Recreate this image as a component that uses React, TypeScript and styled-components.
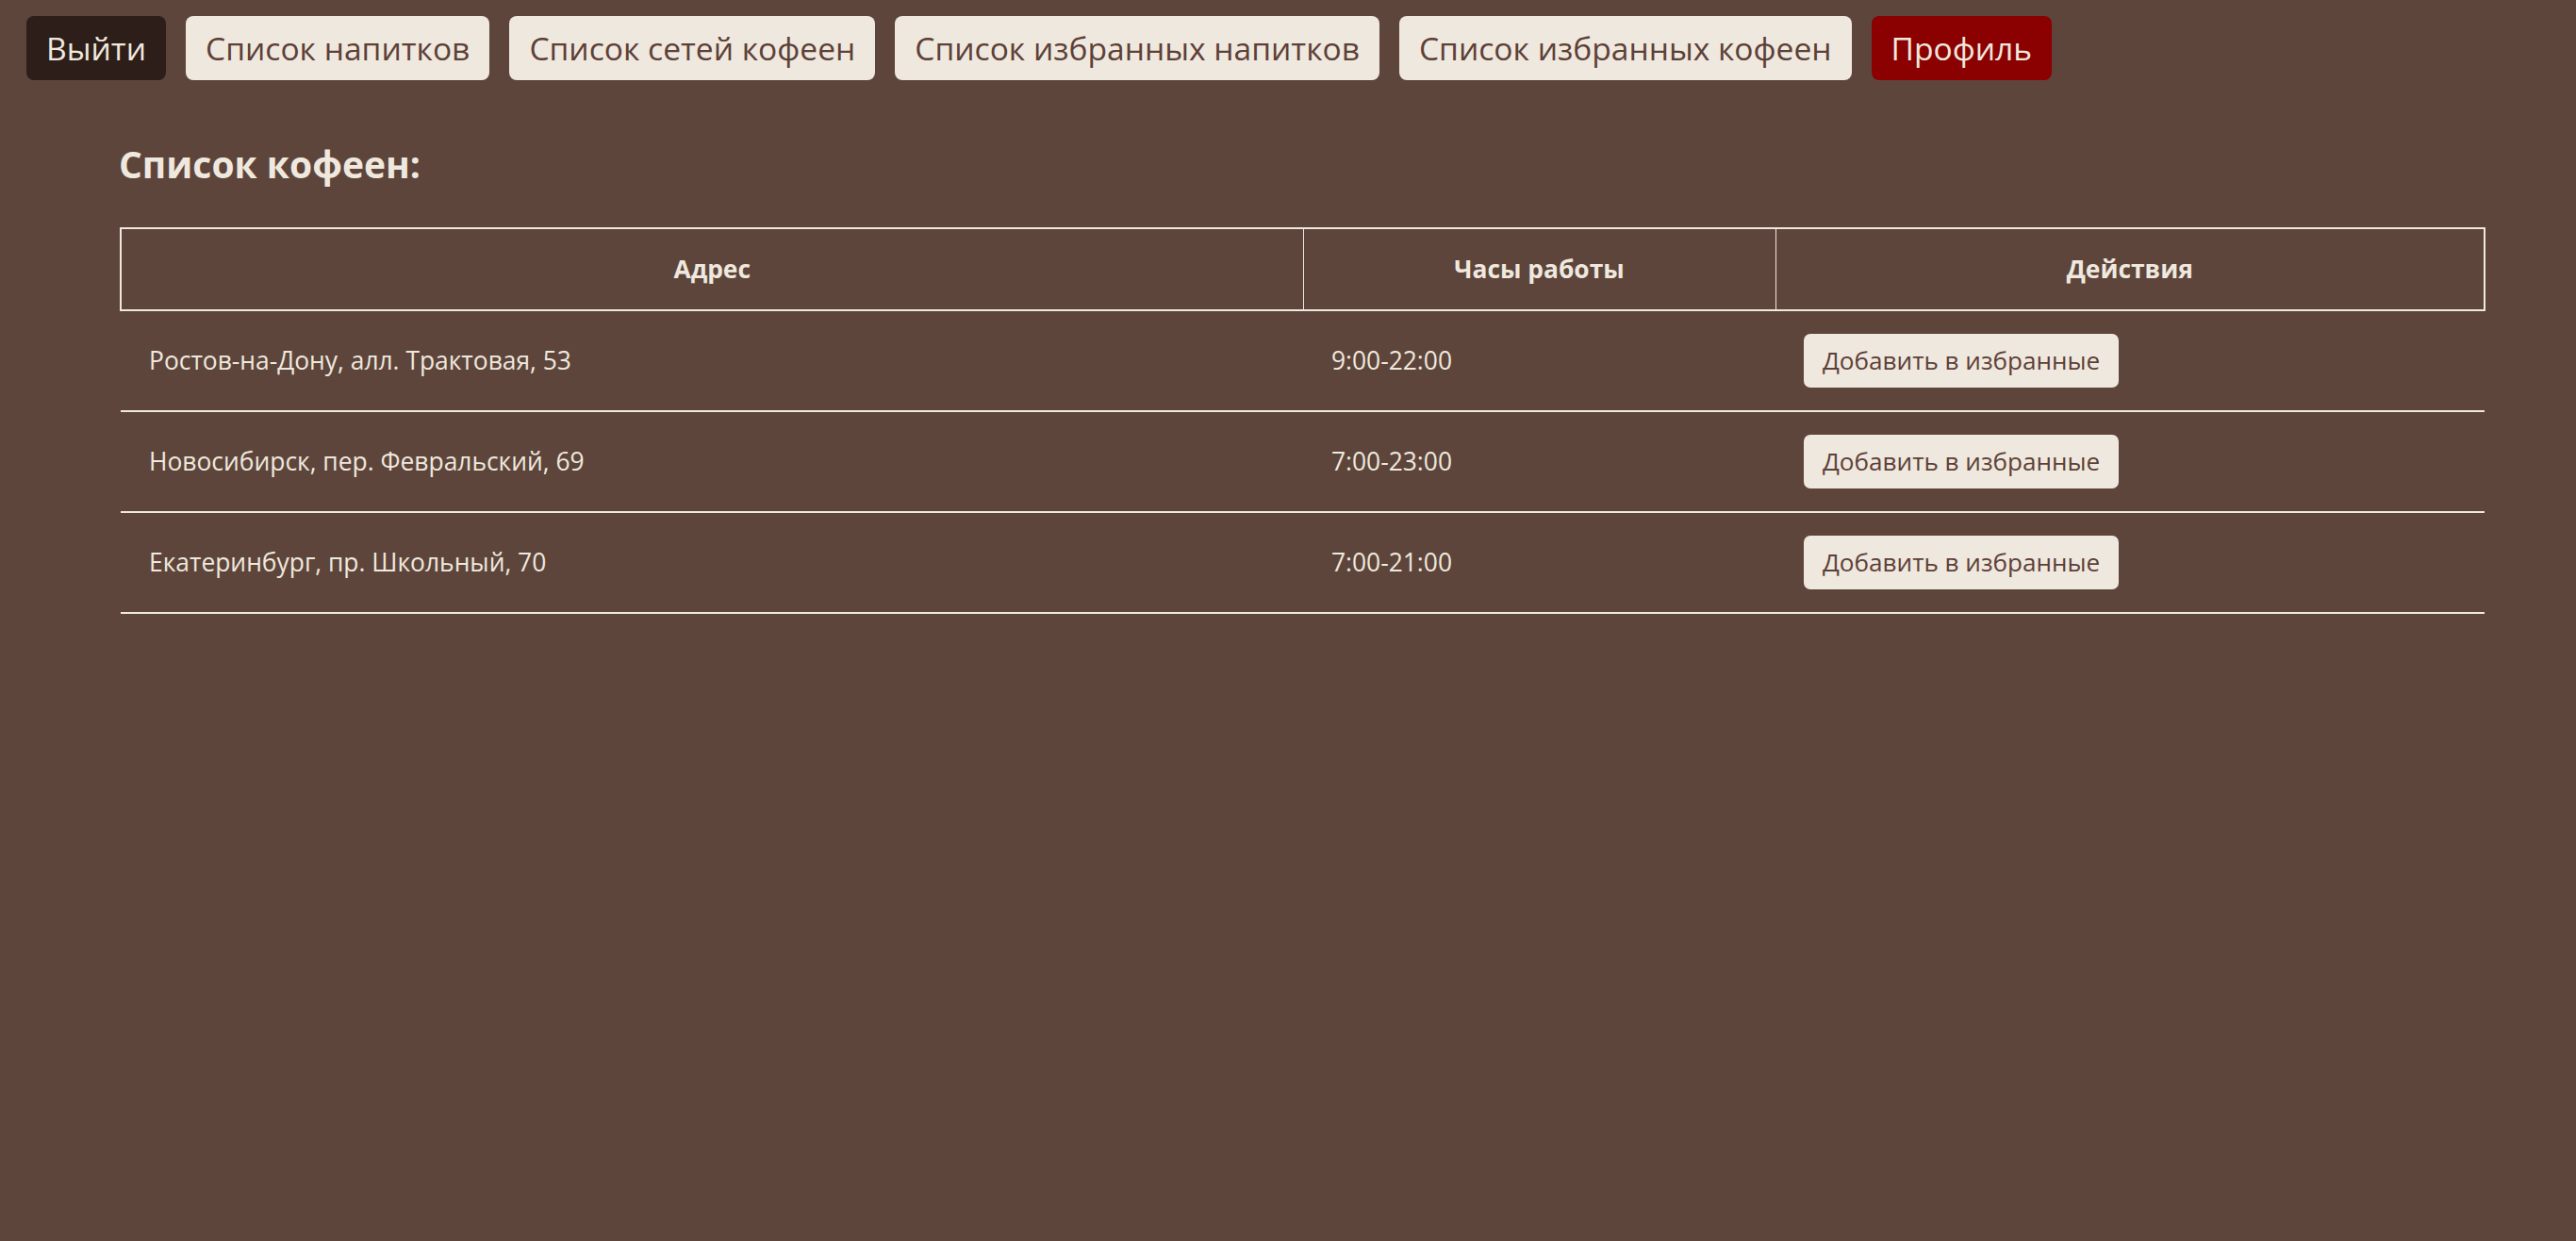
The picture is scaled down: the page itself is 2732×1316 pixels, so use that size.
import React from "react";
import styled, { createGlobalStyle, css } from "styled-components";

const cream = "#efe8de";
const brown = "#5d453b";
const textBrown = "#5d4037";

const GlobalStyle = createGlobalStyle`
  html, body {
    margin: 0;
    padding: 0;
    background: ${brown};
  }
  body {
    font-family: "Open Sans", "Noto Sans", sans-serif;
    color: ${cream};
    min-height: 1316px;
  }
`;

const Page = styled.div`
  display: flex;
  flex-direction: column;
  min-height: 1316px;
  background: ${brown};
`;

const NavBar = styled.nav`
  display: flex;
  align-items: center;
  gap: 21px;
  padding: 17px 0 0 28px;
`;

type Variant = "dark" | "light" | "danger";

const variants: Record<Variant, ReturnType<typeof css>> = {
  dark: css`
    background: #2d1e19;
    color: ${cream};
  `,
  light: css`
    background: ${cream};
    color: ${textBrown};
  `,
  danger: css`
    background: #8b0000;
    color: ${cream};
  `,
};

const NavButton = styled.button<{ $variant: Variant }>`
  height: 68px;
  padding: 2px 21px 0;
  border: none;
  border-radius: 8px;
  font-family: "Open Sans", sans-serif;
  font-size: 33.6px;
  line-height: 1;
  cursor: pointer;
  white-space: nowrap;
  ${(p) => variants[p.$variant]}
`;

const Main = styled.main`
  display: flex;
  flex-direction: column;
  padding: 0 0 0 127px;
`;

const Title = styled.h2`
  margin: 66px 0 43px -1px;
  font-size: 39px;
  font-weight: 700;
  line-height: 1.2;
  color: ${cream};
`;

const Table = styled.table`
  width: 2507px;
  border-collapse: collapse;
  table-layout: fixed;
  font-size: 26.4px;
  color: ${cream};
`;

const Th = styled.th`
  padding: 24px 0 25px;
  font-weight: 700;
  text-align: center;
  line-height: 36px;
  border-top: 2px solid ${cream};
  border-bottom: 2px solid ${cream};
  border-left: 1px solid ${cream};
  border-right: 1px solid ${cream};
  &:first-child {
    border-left: 2px solid ${cream};
  }
  &:last-child {
    border-right: 2px solid ${cream};
  }
`;

const Td = styled.td`
  height: 57px;
  padding: 24px 29px 24px 30px;
  text-align: left;
  vertical-align: middle;
  line-height: 36px;
  border-bottom: 2px solid ${cream};
  white-space: nowrap;
`;

const ActionButton = styled.button`
  display: inline-flex;
  align-items: center;
  height: 57px;
  padding: 0 20px;
  border: none;
  border-radius: 7px;
  background: ${cream};
  color: ${textBrown};
  font-family: "Open Sans", sans-serif;
  font-size: 26.1px;
  cursor: pointer;
  vertical-align: middle;
`;

const navItems: { label: string; variant: Variant }[] = [
  { label: "Выйти", variant: "dark" },
  { label: "Список напитков", variant: "light" },
  { label: "Список сетей кофеен", variant: "light" },
  { label: "Список избранных напитков", variant: "light" },
  { label: "Список избранных кофеен", variant: "light" },
  { label: "Профиль", variant: "danger" },
];

const shops = [
  { address: "Ростов-на-Дону, алл. Трактовая, 53", hours: "9:00-22:00" },
  { address: "Новосибирск, пер. Февральский, 69", hours: "7:00-23:00" },
  { address: "Екатеринбург, пр. Школьный, 70", hours: "7:00-21:00" },
];

export default function App() {
  return (
    <>
      <GlobalStyle />
      <Page>
        <NavBar>
          {navItems.map((n) => (
            <NavButton key={n.label} $variant={n.variant}>
              {n.label}
            </NavButton>
          ))}
        </NavBar>
        <Main>
          <Title>Список кофеен:</Title>
          <Table>
            <colgroup>
              <col style={{ width: 1254 }} />
              <col style={{ width: 501 }} />
              <col style={{ width: 752 }} />
            </colgroup>
            <thead>
              <tr>
                <Th>Адрес</Th>
                <Th>Часы работы</Th>
                <Th>Действия</Th>
              </tr>
            </thead>
            <tbody>
              {shops.map((s) => (
                <tr key={s.address}>
                  <Td>{s.address}</Td>
                  <Td>{s.hours}</Td>
                  <Td>
                    <ActionButton>Добавить в избранные</ActionButton>
                  </Td>
                </tr>
              ))}
            </tbody>
          </Table>
        </Main>
      </Page>
    </>
  );
}
